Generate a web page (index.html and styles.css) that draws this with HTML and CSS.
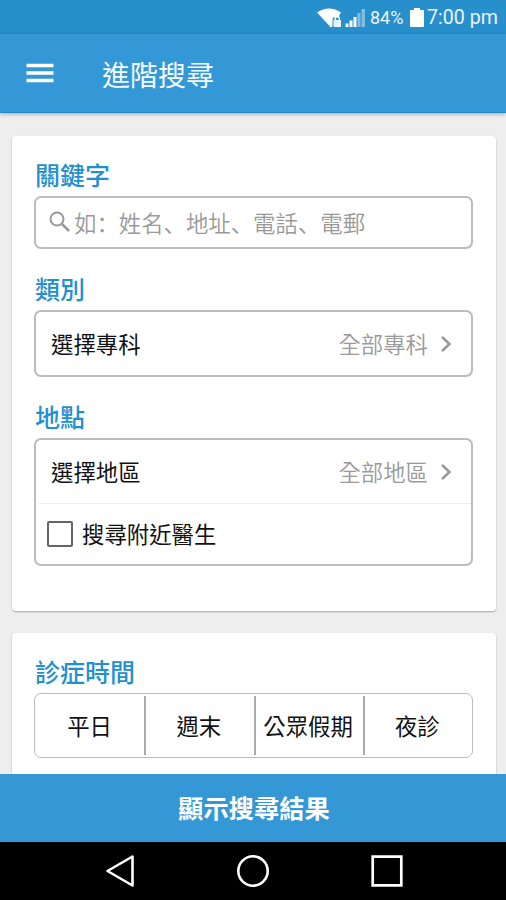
FILE: index.html
```html
<!DOCTYPE html>
<html lang="zh-Hant">
<head>
<meta charset="utf-8">
<title>進階搜尋</title>
<link rel="stylesheet" href="styles.css">
</head>
<body>
<div class="screen">
  <div class="status">
    <svg class="signals" width="50" height="22" viewBox="0 0 50 22">
      <path d="M0 5.500Q12 -2.500 24 5.500L21 10.500Q16 9 15.500 13V19L14 20.500Z" fill="#fff"/>
      <path d="M16.500 13h7.500v7h-7.500z" fill="#e4f2fa"/>
      <path d="M18.300 13v-1.500a2 2 0 0 1 4 0V13" fill="none" stroke="#fff" stroke-width="1.400"/>
      <path d="M28.500 16.500h3V20h-3zM32.500 13.500h3V20h-3zM36.500 10h3V20h-3z" fill="#fff"/>
      <path d="M40.500 6h3V20h-3zM44.500 2h3.500v18h-3.500z" fill="#80bde2"/>
    </svg>
    <span class="percent">84%</span>
    <svg class="battery" width="14" height="20" viewBox="0 0 14 20"><path d="M4 0h6v2h3q1 0 1 1v15q0 1-1 1H1q-1 0-1-1V3q0-1 1-1h3z" fill="#fff"/></svg>
    <span class="clock">7:00 pm</span>
  </div>
  <header class="appbar">
    <svg width="28" height="22" viewBox="0 0 28 22"><path d="M.5 3.500h27M.5 11h27M.5 18.500h27" stroke="#fff" stroke-width="3.300"/></svg>
    <h1>進階搜尋</h1>
  </header>
  <main>
    <section class="card main-card">
      <h2>關鍵字</h2>
      <div class="field search">
        <svg width="22" height="22" viewBox="0 0 22 22" fill="none" stroke="#999" stroke-width="2"><circle cx="8" cy="8" r="6.500"/><path d="M13 13l7 7" stroke-width="2.500"/></svg>
        <span lang="zh-Hans">如：姓名、地址、電話、電郵</span>
      </div>
      <h2>類別</h2>
      <div class="field">
        <div class="row">
          <span>選擇專科</span><span class="value">全部專科</span>
          <svg width="12" height="18" viewBox="0 0 12 18"><path d="M2 2l7.500 7L2 16" fill="none" stroke="#999" stroke-width="2.600"/></svg>
        </div>
      </div>
      <h2>地點</h2>
      <div class="field">
        <div class="row">
          <span>選擇地區</span><span class="value">全部地區</span>
          <svg width="12" height="18" viewBox="0 0 12 18"><path d="M2 2l7.500 7L2 16" fill="none" stroke="#999" stroke-width="2.600"/></svg>
        </div>
        <div class="nearby"><i class="box"></i><span>搜尋附近醫生</span></div>
      </div>
    </section>
    <section class="card time-card">
      <h2>診症時間</h2>
      <div class="field segments">
        <span>平日</span><span>週末</span><span>公眾假期</span><span>夜診</span>
      </div>
    </section>
  </main>
  <div class="submit">顯示搜尋結果</div>
  <nav class="navbar">
    <svg width="30" height="34" viewBox="0 0 30 34"><path d="M2.500 17L27.500 2.500v29z" fill="none" stroke="#fff" stroke-width="2.600" stroke-linejoin="round"/></svg>
    <svg width="34" height="34" viewBox="0 0 34 34"><circle cx="17" cy="17" r="14.700" fill="none" stroke="#fff" stroke-width="2.600"/></svg>
    <svg width="34" height="34" viewBox="0 0 34 34"><path d="M2.700 2.700h28.600v28.600H2.700z" fill="none" stroke="#fff" stroke-width="2.700"/></svg>
  </nav>
</div>
</body>
</html>
```
FILE: styles.css
```css
* { box-sizing: border-box; }
body { margin: 0; }
h1, h2 { margin: 0; }
svg { display: block; flex: none; }
.screen {
  display: flex;
  flex-direction: column;
  width: 506px;
  height: 900px;
  overflow: hidden;
  background: #eee;
  color: #111;
  font: 400 22.4px/32px Roboto, "Noto Sans CJK TC", sans-serif;
}
.status {
  display: flex;
  flex: none;
  align-items: center;
  height: 34px;
  padding: 2px 8px 0 317px;
  background: #288fcd;
  color: #e8f4fb;
}
.signals { margin-right: 3px; }
.percent { width: 40px; font-size: 18px; white-space: nowrap; }
.battery { margin-right: 3px; }
.clock { font-size: 19.6px; white-space: nowrap; }
.appbar {
  position: relative;
  display: flex;
  flex: none;
  align-items: center;
  height: 79px;
  padding-left: 26px;
  gap: 48px;
  background: #3398d5;
  border-bottom: 1px solid #1c8ccd;
  box-shadow: 0 1px 4px rgba(0, 0, 0, .3);
  color: #f4faff;
}
.appbar h1 { padding-top: 7px; font-size: 28px; font-weight: 400; line-height: 40px; }
main {
  flex: 1;
  min-height: 0;
  overflow: hidden;
  padding: 23px 10px 0 12px;
}
.card {
  padding: 25px 23px 0 22px;
  border-radius: 4px;
  background: #fff;
  box-shadow: 0 1px 2px rgba(0, 0, 0, .3);
}
.main-card { height: 475px; margin-bottom: 22px; }
.time-card { height: 190px; }
.card h2 {
  margin-bottom: 3px;
  padding-left: 1px;
  color: #2190d0;
  font-size: 25px;
  font-weight: 500;
}
.field {
  border: 2px solid #bbb;
  border-radius: 7px;
}
.field + h2 { margin-top: 26px; }
.search {
  display: flex;
  align-items: center;
  height: 53px;
  padding: 0 0 2px 13px;
  gap: 3px;
  color: #999;
  font-family: "Noto Sans CJK SC", sans-serif;
  font-weight: 350;
}
.row {
  display: flex;
  align-items: center;
  height: 63px;
  padding: 0 19px 0 15px;
}
.row span { padding-top: 2px; }
.value { margin-left: auto; margin-right: 12px; color: #999; font-weight: 350; }
.nearby {
  display: flex;
  align-items: center;
  height: 61px;
  margin-left: 2px;
  padding: 0 0 1px 9px;
  gap: 9px;
  border-top: 1px solid #eee;
}
.nearby span { padding-top: 2px; }
.box {
  width: 26px;
  height: 26px;
  border: 2px solid #666;
  border-radius: 2px;
}
.segments {
  display: grid;
  grid-template-columns: repeat(4, 1fr);
  align-items: center;
  height: 65px;
  border-width: 1.5px;
  padding: 2px 0;
}
.segments span {
  height: 59px;
  line-height: 62px;
  text-align: center;
  white-space: nowrap;
}
.segments span + span { padding-right: 2px; border-left: 2px solid #aaa; }
.submit {
  flex: none;
  height: 68px;
  background: #3398d5;
  color: #fff;
  font-size: 25.3px;
  font-weight: 700;
  line-height: 71px;
  text-align: center;
  padding-left: 2px;
}
.navbar {
  display: flex;
  flex: none;
  justify-content: space-between;
  height: 58px;
  padding: 12px 102px 0 105px;
  background: #000;
}
```
